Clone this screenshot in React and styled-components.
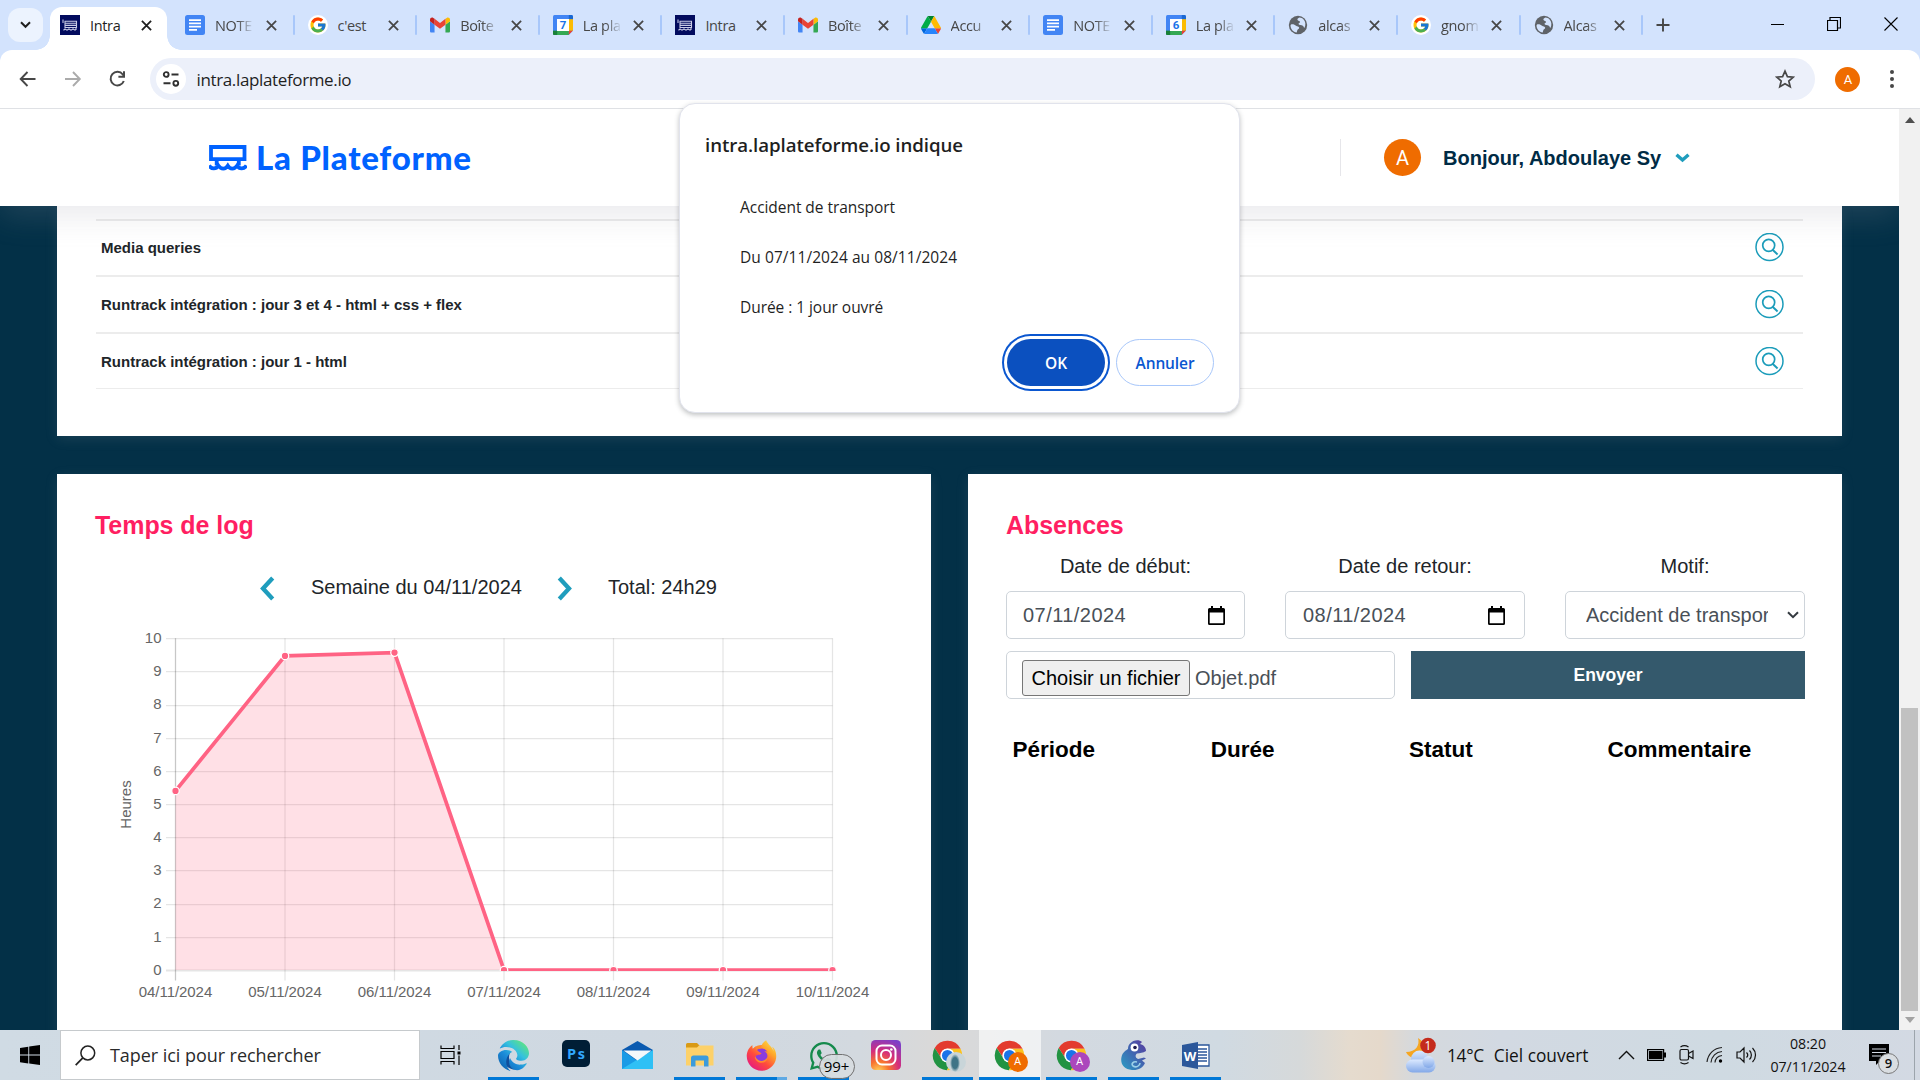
import React from "react";
import styled, { createGlobalStyle, css } from "styled-components";
import { FcGoogle } from "react-icons/fc";
import { FaWhatsapp, FaEdge, FaFirefoxBrowser } from "react-icons/fa6";

const ui = `"Open Sans", "Noto Sans", sans-serif`;
const arial = `"Liberation Sans", Arial, sans-serif`;

const Global = createGlobalStyle`
  * { box-sizing: border-box; }
  body { margin: 0; overflow: hidden; background: #fff; }
  svg { display: block; flex: none; }
`;

const Screen = styled.div`
  width: 1920px; height: 1080px; overflow: hidden; position: relative;
  display: flex; flex-direction: column; font-family: ${arial}; color: #212529;
`;

/* ---------- browser chrome ---------- */
const TabStrip = styled.div`
  height: 50px; flex: none; background: #d3e3fd; display: flex; align-items: flex-start;
  padding-left: 8px; font-family: ${ui}; font-size: 14.5px; color: #474747;
`;
const TabSearch = styled.div`
  width: 35px; height: 34px; margin: 8px 5px 0 0; border-radius: 12px; background: #ecf3fe;
  display: flex; align-items: center; justify-content: center;
`;
const Tab = styled.div`
  width: 122.6px; height: 43px; margin-top: 7px; padding: 0 10px 7px 14px; position: relative;
  display: flex; align-items: center;
  ${(p) => p.$sep && css`
    &::after { content: ""; position: absolute; right: -1px; top: 8px; width: 2px; height: 20px; background: #a8c7fa; border-radius: 1px; }
  `}
  ${(p) => p.$active && css`
    width: 116.5px; margin-right: 4.5px; margin-left: 2px; padding-left: 10px; padding-right: 14px; background: #fff; border-radius: 12px 12px 0 0; color: #1f1f1f;
    &::before, &::after { content: ""; position: absolute; bottom: 0; width: 14px; height: 14px; }
    &::before { left: -14px; background: radial-gradient(circle at 0 0, transparent 13.5px, #fff 14px); }
    &::after { right: -14px; background: radial-gradient(circle at 100% 0, transparent 13.5px, #fff 14px); }
  `}
`;
const TabTitle = styled.div`
  width: 37px; margin-left: 10px; overflow: hidden; white-space: nowrap; line-height: 22px; letter-spacing: -0.35px; padding-top: 1px;
  ${(p) => p.$fade && css`
    -webkit-mask-image: linear-gradient(90deg, #000 60%, rgba(0,0,0,.12) 100%);
    mask-image: linear-gradient(90deg, #000 60%, rgba(0,0,0,.12) 100%);
  `}
`;
const TabClose = styled.div` margin-left: 13.5px; padding-top: 1px; `;
const NewTab = styled.div` margin: 18px 0 0 14px; `;
const WindowButtons = styled.div`
  margin-left: auto; padding: 17px 22px 0 0; display: flex; gap: 42.7px; align-items: center;
`;

const ToolbarBack = styled.div` background: #d3e3fd; flex: none; height: 59px; `;
const Toolbar = styled.div`
  height: 59px; background: #fff; border-radius: 12px 12px 0 0; border-bottom: 1px solid #dfe1e5;
  display: flex; align-items: center; padding-left: 18px;
`;
const NavButtons = styled.div` display: flex; gap: 24.7px; margin-right: 22.6px; `;
const Omnibox = styled.div`
  width: 1665px; height: 42px; border-radius: 21px; background: #ecf0fa; margin-right: 20.5px;
  display: flex; align-items: center; padding: 0 19.5px 0 6px; font-family: ${ui}; color: #1f1f1f;
`;
const SiteInfo = styled.div`
  width: 30px; height: 30px; border-radius: 50%; background: #fff; margin-right: 10.5px;
  display: flex; align-items: center; justify-content: center;
`;
const Url = styled.div` font-size: 17px; letter-spacing: -0.36px; margin-right: auto; line-height: 24px; padding-top: 1px; `;
const Avatar = styled.div`
  width: ${(p) => p.$size}px; height: ${(p) => p.$size}px; border-radius: 50%; background: #ef6c00; color: #fff;
  display: flex; align-items: center; justify-content: center; font: 400 ${(p) => p.$font}px Roboto, sans-serif; flex: none;
`;
const Menu = styled.div` margin-left: 26px; display: flex; `;

/* ---------- web page ---------- */
const Viewport = styled.div` flex: 1; min-height: 0; display: flex; `;
const Page = styled.div`
  width: 1899px; background: #033047; display: flex; flex-direction: column; overflow: hidden;
`;
const SiteHeader = styled.header`
  height: 97px; flex: none; background: #fff; position: relative; z-index: 2;
  box-shadow: 0 10px 30px rgba(150, 152, 165, 0.2);
  display: flex; align-items: center; padding-left: 209px;
`;
const LogoText = styled.div`
  font: 900 33px Lato, sans-serif; color: #0062ff; margin-left: 9px; letter-spacing: 0.75px; width: 1084px; white-space: nowrap; padding-bottom: 2px;
`;
const UserMenu = styled.div`
  display: flex; align-items: center; height: 37px; border-left: 1px solid #e6e6ea; padding-left: 43px;
`;
const Greeting = styled.div` font-size: 20px; font-weight: 700; color: #002b45; margin: 0 14px 0 22px; padding-top: 1px; white-space: nowrap; `;

const Main = styled.main` width: 1785px; margin-left: 57px; flex: none; `;
const Panel = styled.section` background: #fff; box-shadow: 0 3px 12px rgba(160, 160, 170, 0.14); `;
const Projects = styled(Panel)` height: 230px; padding: 13px 39px 0; `;
const ProjectRow = styled.div`
  height: ${(p) => p.$h}px; border-top: 2px solid #ececec; display: flex; align-items: center; justify-content: space-between;
  padding: 0 19px ${(p) => p.$lift || 0}px 5px; font-size: 15px; font-weight: 700; color: #212529;
`;
const ProjectsEnd = styled.div` height: 1px; background: #ececec; `;
const Columns = styled.div` display: grid; grid-template-columns: 874px 874px; gap: 37px; margin-top: 38px; `;
const Card = styled(Panel)` height: 600px; padding: 36px 38px 0; `;
const CardTitle = styled.h2` margin: 0; font-size: 25px; line-height: 30px; font-weight: 700; color: #ff1f62; letter-spacing: -0.05px; `;

const WeekNav = styled.div` height: 30px; margin: 33px 0 0 165px; display: flex; align-items: center; font-size: 20px; `;
const WeekLabel = styled.div` width: 210px; margin: 0 36px; padding-bottom: 2px; white-space: nowrap; `;
const Total = styled.div` margin-left: 36px; padding-bottom: 2px; white-space: nowrap; `;

const Form = styled.div` font-size: 20px; `;
const FieldRow = styled.div` display: grid; grid-template-columns: 239px 240px 240px; gap: 40px; margin-top: 9px; `;
const Field = styled.div` display: flex; flex-direction: column; gap: 10px; `;
const FieldLabel = styled.div` text-align: center; height: 32px; line-height: 34px; `;
const Control = styled.div`
  height: 48px; border: 1px solid #ced4da; border-radius: 5px; background: #fff; color: #495057;
  display: flex; align-items: center; padding: 0 ${(p) => p.$right}px 0 ${(p) => p.$left}px; white-space: nowrap;
`;
const DateText = styled.div` margin-right: auto; letter-spacing: 0.45px; padding-top: 1px; `;
const SelectText = styled.div` width: 182px; overflow: hidden; margin-right: auto; padding-top: 1px; `;
const SubmitRow = styled.div` display: grid; grid-template-columns: 389px 394px; gap: 16px; margin-top: 12px; `;
const FileControl = styled(Control)` align-items: flex-start; padding-top: 8px; gap: 5px; line-height: 36px; `;
const FileButton = styled.div`
  width: 168px; height: 36px; border: 1px solid #767676; border-radius: 3px; background: #efefef; color: #000;
  text-align: center; line-height: 34px;
`;
const Submit = styled.div`
  height: 48px; background: #34596c; color: #fff; font-size: 17.5px; font-weight: 700; text-align: center; line-height: 48px;
`;
const AbsenceHead = styled.div`
  display: grid; grid-template-columns: repeat(4, 198.3px); margin: 37px 0 0 6.5px; font-size: 22.5px; font-weight: 700; color: #000; line-height: 28px;
`;

const Scrollbar = styled.div`
  width: 21px; background: #f1f1f1; display: flex; flex-direction: column; align-items: center; padding: 8px 0 7px;
`;
const Thumb = styled.div` width: 17px; height: 303px; background: #c1c1c1; margin-top: auto; margin-bottom: 6px; `;

/* ---------- alert dialog ---------- */
const Dialog = styled.div`
  position: absolute; left: 679px; top: 103px; width: 561px; height: 310px; z-index: 5; background: #fff;
  border: 1px solid #e1e3ec; border-radius: 16px; box-shadow: 0 2px 5px rgba(60, 64, 67, 0.32);
  padding: 27px 25px 0 25px; font-family: ${ui}; color: #1f1f1f;
`;
const DialogTitle = styled.div` font-size: 18.7px; font-weight: 600; line-height: 28px; letter-spacing: -0.07px; white-space: nowrap; `;
const DialogLine = styled.div` font-size: 15.5px; line-height: 50px; padding-left: 35px; letter-spacing: ${(p) => p.$track || -0.05}px; `;
const DialogBody = styled.div` padding-top: 23px; `;
const DialogActions = styled.div` display: flex; justify-content: flex-end; gap: 11px; margin-top: 7px; `;
const DialogButton = styled.div`
  width: 98px; height: 47px; border-radius: 24px; font-size: 15.5px; font-weight: 600; letter-spacing: -0.1px;
  display: flex; align-items: center; justify-content: center; padding-top: 1px;
  ${(p) => p.$primary
    ? css` background: #0b50bf; color: #fff; box-shadow: 0 0 0 3px #fff, 0 0 0 5px #0b57d0; `
    : css` border: 1px solid #a8c7fa; color: #0b57d0; `}
`;

/* ---------- taskbar ---------- */
const Taskbar = styled.div`
  height: 50px; flex: none; display: flex; align-items: stretch; font-family: ${ui}; color: #111; position: relative; z-index: 3;
  background: linear-gradient(90deg, #d0dbe4 0, #cfd8e1 640px, #d3d9df 860px, #dad9d8 940px, #d3d9e0 1060px, #d0dae2 1220px, #d6d9da 1300px, #e5dbce 1350px, #e5d9cb 1380px, #d5d9dd 1415px, #d2d9e2 1500px, #cfdae2 1720px, #d3d9e3 1920px);
`;
const Start = styled.div` width: 60px; display: flex; align-items: center; justify-content: center; `;
const SearchBox = styled.div`
  width: 360px; background: #fff; border: 1px solid #c6cacd; display: flex; align-items: center; padding-left: 14px; gap: 14px;
  font-size: 18px; letter-spacing: -0.05px; color: #2a2a2a; white-space: nowrap;
`;
const TaskView = styled.div` width: 62.5px; display: flex; align-items: center; justify-content: center; padding-right: 2.5px; `;
const AppSlot = styled.div`
  width: 62px; display: flex; flex-direction: column; align-items: center; position: relative; padding-top: 10px;
  background: ${(p) => (p.$active ? "rgba(255,255,255,.62)" : "none")};
`;
const Underline = styled.div`
  margin-top: auto; height: 3px; width: ${(p) => (p.$wide ? 61 : 51)}px;
  background: ${(p) => (p.$split ? "linear-gradient(90deg, #0078d7 41px, #5fa9e4 41px)" : "#0078d7")};
`;
const AppIcon = styled.div`
  width: 30px; height: 30px; position: relative; margin-top: ${(p) => p.$top || 0}px; display: flex; justify-content: center;
`;
const Badge = styled.div`
  position: absolute; left: 10px; top: 14px; width: 36px; height: 25px; border-radius: 13px; border: 1px solid #707070; background: rgba(215,220,224,.93);
  font-size: 15px; line-height: 22px; text-align: center; color: #000; z-index: 1;
`;
const Profile = styled.div`
  position: absolute; left: 13px; top: 12px; width: 20px; height: 20px; border-radius: 50%; background: ${(p) => p.$bg};
  color: #fff; font: 400 11px/20px Roboto, sans-serif; text-align: center;
`;
const Tray = styled.div` margin-left: auto; display: flex; align-items: center; width: 515px; `;
const Weather = styled.div` display: flex; align-items: center; font-size: 17.3px; letter-spacing: 0; gap: 10px; width: 210px; white-space: nowrap; `;
const Temp = styled.span` letter-spacing: -0.3px; `;
const TrayIcons = styled.div` display: flex; align-items: center; gap: 8px; width: 148px; margin-left: 3px; `;
const Clock = styled.div`
  width: 80px; margin-left: 2px; text-align: center; font-size: 14.2px; letter-spacing: -0.02px; line-height: 23px; white-space: nowrap; height: 46px; display: flex; flex-direction: column; align-items: center;
`;
const Notif = styled.div` margin-left: 20px; width: 33px; height: 30px; position: relative; padding-top: 4px; `;
const NotifCount = styled.div`
  position: absolute; left: 10px; top: 13px; width: 21px; height: 21px; border-radius: 50%; border: 1px solid #777; background: #d9dde1;
  font-size: 13px; font-weight: 600; line-height: 19px; text-align: center;
`;
const ShowDesktop = styled.div` margin-left: auto; width: 6px; align-self: stretch; border-left: 1px solid #9ca4ac; `;

/* ---------- favicons ---------- */
const LaPlateformeFav = () => (
  <svg width="20" height="20" viewBox="0 0 20 20"><rect width="20" height="20" fill="#020b5e" />
    <path d="M3 4.500V8M4.500 6.200H16.500V12.500H5V6.200M5 8.300H16.500M5 10.400H16.500M3.500 15.200l1.500-1.200 2 1.200 2-1.200 2 1.200 2-1.200 2 1.200 1.500-1.200M16 12.500V14" fill="none" stroke="#c9cbe6" strokeWidth="1.100" /></svg>
);
const DocsFav = () => (
  <svg width="20" height="20" viewBox="0 0 20 20"><rect width="20" height="20" rx="2.500" fill="#4285f4" />
    <path d="M4 5.200h12M4 8.400h12M4 11.600h12M4 14.800h8" stroke="#fff" strokeWidth="1.700" /></svg>
);
const GoogleFav = () => (
  <svg width="20" height="20" viewBox="0 0 20 20"><circle cx="10" cy="10" r="10" fill="#fff" /><FcGoogle x="1" y="1" size={18} /></svg>
);
const GmailFav = () => (
  <svg width="20" height="20" viewBox="52 42 88 66">
    <path fill="#4285f4" d="M58 108h14V74L52 59v43c0 3.320 2.690 6 6 6" /><path fill="#34a853" d="M120 108h14c3.320 0 6-2.690 6-6V59l-20 15" />
    <path fill="#fbbc04" d="M120 48v26l20-15v-8c0-7.420-8.470-11.650-14.400-7.200" /><path fill="#ea4335" d="M72 74V48l24 18 24-18v26L96 92" />
    <path fill="#c5221f" d="M52 51v8l20 15V48l-5.600-4.200c-5.940-4.450-14.400-.22-14.400 7.200" /></svg>
);
const CalFav = ({ day }) => (
  <svg width="20" height="20" viewBox="0 0 20 20">
    <rect width="20" height="20" rx="1.500" fill="#4285f4" /><path d="M15.800 0H18.500A1.500 1.500 0 0 1 20 1.500V4.200H15.800Z" fill="#1967d2" />
    <path d="M15.800 4.200H20V15.800H15.800Z" fill="#fbbc04" /><path d="M0 15.800H15.800V20H1.500A1.500 1.500 0 0 1 0 18.500Z" fill="#34a853" />
    <path d="M0 15.800H4.200V20H1.500A1.500 1.500 0 0 1 0 18.500Z" fill="#188038" /><path d="M15.800 15.800H20L15.800 20Z" fill="#ea4335" /><path d="M20 15.800V20H15.800Z" fill="#d3e3fd" />
    <rect x="4" y="4" width="12" height="12" fill="#fff" />
    <text x="10" y="14.200" fontSize="11.500" fontWeight="700" textAnchor="middle" fill="#1a73e8" fontFamily="Roboto, sans-serif">{day}</text></svg>
);
const DriveFav = () => (
  <svg width="20" height="18" viewBox="0 0 87.300 78">
    <path d="m6.600 66.850 3.850 6.650c.8 1.400 1.950 2.500 3.300 3.300l13.750-23.800h-27.500c0 1.550.4 3.100 1.200 4.500z" fill="#0066da" />
    <path d="m43.650 25-13.750-23.800c-1.350.8-2.500 1.900-3.300 3.300l-25.400 44a9.060 9.060 0 0 0-1.200 4.500h27.500z" fill="#00ac47" />
    <path d="m73.550 76.800c1.350-.8 2.500-1.900 3.300-3.300l1.600-2.750 7.650-13.250c.8-1.400 1.200-2.950 1.200-4.500h-27.500l5.850 11.500z" fill="#ea4335" />
    <path d="m43.650 25 13.750-23.800c-1.350-.8-2.900-1.200-4.500-1.200h-18.500c-1.600 0-3.150.45-4.500 1.200z" fill="#00832d" />
    <path d="m59.800 53h-32.300l-13.750 23.800c1.350.8 2.900 1.200 4.500 1.200h50.800c1.600 0 3.150-.45 4.500-1.200z" fill="#2684fc" />
    <path d="m73.400 26.500-12.700-22c-.8-1.400-1.950-2.500-3.300-3.300l-13.750 23.800 16.150 28h27.450c0-1.550-.4-3.100-1.200-4.500z" fill="#ffba00" /></svg>
);
const GlobeFav = () => (
  <svg width="20" height="20" viewBox="0 0 20 20"><circle cx="10" cy="10" r="9.200" fill="#5f6368" />
    <path d="M3 9.500c2-.5 4 .3 5 1.300 1.200 1 3 .6 3.200 2 .1 1.300-1.600 1.200-1.900 2.500l-.6 2.200C5 17 2.600 14 2.500 10.500ZM11.500 2.500c-1.300.8-2.500 1.200-2 2.600.5 1.200 2.600.5 2.500 2-.1 1.300-1.700 1-1.500 2 .4 1.300 3.200.7 4.300 1.600 1 .8.7 1.800 1.800 2 1.300-2.800 1-6.300-1-8.300-1.300-1.200-2.600-1.800-4.100-1.900Z" fill="#d3e3fd" /></svg>
);
const Cross = () => (
  <svg width="11" height="11" viewBox="0 0 11 11"><path d="M.9.9l9.200 9.200M10.100.9.9 10.100" stroke="currentColor" strokeWidth="1.800" /></svg>
);

const tabs = [
  { icon: <LaPlateformeFav />, title: "Intra", active: true },
  { icon: <DocsFav />, title: "NOTE", fade: true },
  { icon: <GoogleFav />, title: "c'est" },
  { icon: <GmailFav />, title: "Boîte", fade: true },
  { icon: <CalFav day="7" />, title: "La pla", fade: true },
  { icon: <LaPlateformeFav />, title: "Intra" },
  { icon: <GmailFav />, title: "Boîte", fade: true },
  { icon: <DriveFav />, title: "Accu", fade: true },
  { icon: <DocsFav />, title: "NOTE", fade: true },
  { icon: <CalFav day="6" />, title: "La pla", fade: true },
  { icon: <GlobeFav />, title: "alcas", fade: true },
  { icon: <GoogleFav />, title: "gnom", fade: true },
  { icon: <GlobeFav />, title: "Alcas", fade: true },
];

/* ---------- page drawings ---------- */
const Logo = () => (
  <svg width="38" height="26" viewBox="0 0 38 26" fill="none" stroke="#0062ff" strokeWidth="3.800">
    <path d="M2 2H35.500V14.200H2Z" /><path d="M7.700 14.500V20.500M29.800 14.500V20.500" />
    <path d="M0 20.500C2.500 24.300 7 24.500 9.500 20.800 12 24.500 16.500 24.500 18.800 20.800 21 24.500 25.500 24.500 28 20.800 30.500 24.500 35 24.300 37.500 20.500" strokeWidth="3.800" /></svg>
);
const Loupe = () => (
  <svg width="29" height="29" viewBox="0 0 29 29" fill="none" stroke="#1b9cba" strokeWidth="1.500">
    <circle cx="14.500" cy="14" r="13.500" /><circle cx="13.700" cy="12.300" r="6" strokeWidth="1.700" /><path d="M17.600 16.700l5 4.800" strokeWidth="1.900" /></svg>
);
const Chevron = ({ right }) => (
  <svg width="15" height="25" viewBox="0 0 15 25">
    <path d={right ? "M2.300 2 12 12.500 2.300 23" : "M12.700 2 3 12.500l9.700 10.500"} fill="none" stroke="#1f9dbd" strokeWidth="4.300" /></svg>
);
const CalendarGlyph = () => (
  <svg width="17" height="19" viewBox="0 0 17 19"><path d="M3 0h2v2h7V0h2v2h1.500A1.500 1.500 0 0 1 17 3.500V17.500A1.500 1.500 0 0 1 15.500 19H1.500A1.500 1.500 0 0 1 0 17.500V3.500A1.500 1.500 0 0 1 1.500 2H3ZM1.700 6.500V17.200H15.300V6.500Z" fill="#000" fillRule="evenodd" /></svg>
);

const days = ["04/11/2024", "05/11/2024", "06/11/2024", "07/11/2024", "08/11/2024", "09/11/2024", "10/11/2024"];
const hours = [5.4, 9.47, 9.57, 0, 0, 0, 0];
const ChartSvg = styled.svg` margin: 25px 0 0 17px; font-family: ${arial}; `;
function HoursChart() {
  const px = (i) => 63.5 + i * 109.5;
  const py = (v) => 342 - v * 33.17;
  const line = hours.map((v, i) => `${px(i)},${py(v)}`).join(" ");
  return (
    <ChartSvg width="780" height="384" viewBox="0 0 780 384" fontSize="15" fill="#666">
      <clipPath id="area"><rect x="58" y="0" width="720" height="343" /></clipPath>
      {Array.from({ length: 11 }, (_, v) => (
        <g key={v}>
          <path d={`M54 ${Math.round(py(v)) + 0.5}H${px(6)}`} stroke="rgba(0,0,0,.1)" strokeWidth={v === 0 ? 1.8 : 1.25} />
          <text x="49.500" y={py(v) + 4.800} textAnchor="end">{v}</text>
        </g>
      ))}
      {days.map((d, i) => (
        <g key={d}>
          <path d={`M${px(i)} ${py(10)}V352.500`} stroke={i ? "rgba(0,0,0,.1)" : "rgba(0,0,0,.22)"} strokeWidth="1.250" />
          <text x={px(i)} y="368.500" textAnchor="middle" textLength="73.500">{d}</text>
        </g>
      ))}
      <text transform="translate(18.500 176.500) rotate(-90)" textAnchor="middle" fontSize="15">Heures</text>
      <g clipPath="url(#area)">
        <polygon points={`${px(0)},${py(0)} ${line}`} fill="rgba(255,99,132,.2)" />
        <polyline points={line} fill="none" stroke="#ff6384" strokeWidth="3.750" />
        {hours.map((v, i) => <circle key={i} cx={px(i)} cy={py(v)} r="3.750" fill="#ff6384" stroke="#fff" strokeWidth="1.250" />)}
      </g>
    </ChartSvg>
  );
}

/* ---------- taskbar icons ---------- */
const ChromeIcon = () => (
  <svg width="31" height="31" viewBox="1 1 46 46">
    <path d="M5 13A22 22 0 0 1 43.400 14L24 14A10 10 0 0 0 15.300 29Z" fill="#e33b2e" />
    <path d="M5 13 15.300 29A10 10 0 0 0 32.700 29L23 46A22 22 0 0 1 5 13Z" fill="#229342" />
    <path d="M24 14H43.400A22 22 0 0 1 23 46L32.700 29A10 10 0 0 0 24 14Z" fill="#fcc31e" />
    <circle cx="24" cy="24" r="10.500" fill="#fff" /><circle cx="24" cy="24" r="8.200" fill="#1a73e8" /></svg>
);
const EdgeIcon = () => (
  <svg width="31" height="31" viewBox="0 0 31 31">
    <defs>
      <linearGradient id="edge" x1="0" y1="1" x2="0.900" y2="0"><stop offset="0" stopColor="#0c59a4" /><stop offset=".4" stopColor="#1b8ad8" /><stop offset=".65" stopColor="#35c1df" /><stop offset="1" stopColor="#66eb6e" /></linearGradient>
    </defs>
    <path d="M12 13C9 19 13 26 20 26.500 23 26.500 26 25 27 24 24 28 20 30 15 29.500 6 27 3 20 6 14Z" fill="#114f9c" />
    <FaEdge size={31} fill="url(#edge)" /></svg>
);
const PsIcon = () => (
  <svg width="28" height="28" viewBox="0 0 28 28"><rect width="28" height="27" rx="5" fill="#001e36" />
    <text x="14" y="18.500" fontSize="14.500" fontWeight="700" fill="#31a8ff" textAnchor="middle" fontFamily="Open Sans, sans-serif" textLength="18">Ps</text></svg>
);
const MailIcon = () => (
  <svg width="31" height="30" viewBox="0 0 31 30"><path d="M0 10 15.500 1 31 10V29H0Z" fill="#0a5ab0" /><path d="M0 10 15.500 21 31 10V29H0Z" fill="#1a9be6" /><path d="M0 29 31 10V29Z" fill="#2fc0f5" /><path d="M1.500 10.500H29.500L15.500 20.500Z" fill="#f4f8fb" /></svg>
);
const FolderIcon = () => (
  <svg width="28" height="26" viewBox="0 0 28 26"><path d="M0 1.500A1.500 1.500 0 0 1 1.500 0H11L13.500 2.500V8H0Z" fill="#d99a15" /><path d="M0 4.500H11L13 2.500H27.500V22.500H0Z" fill="#fdd169" />
    <path d="M5 15A2.500 2.500 0 0 1 7.500 12.500H20A2.500 2.500 0 0 1 22.500 15V23.500H18V17.500H9.500V23.500H5Z" fill="#3b9bdc" /></svg>
);
const FirefoxIcon = () => (
  <svg width="31" height="31" viewBox="0 0 31 31">
    <defs><linearGradient id="fox" x1="1" y1="0" x2="0.200" y2="1"><stop offset="0" stopColor="#fff44f" /><stop offset=".35" stopColor="#ffa52a" /><stop offset=".65" stopColor="#ff4a3c" /><stop offset="1" stopColor="#e31587" /></linearGradient></defs>
    <circle cx="15.500" cy="16" r="11" fill="#ff8a2c" /><circle cx="15.500" cy="14.500" r="6.500" fill="#8a3be0" /><FaFirefoxBrowser size={31} fill="url(#fox)" /></svg>
);
const InstaIcon = () => (
  <svg width="30" height="30" viewBox="0 0 30 30">
    <defs><radialGradient id="ig" cx=".25" cy="1.050" r="1.150"><stop offset="0" stopColor="#fed65c" /><stop offset=".3" stopColor="#f8742e" /><stop offset=".6" stopColor="#d62e7a" /><stop offset="1" stopColor="#7c3fc8" /></radialGradient></defs>
    <rect width="30" height="30" rx="4.500" fill="url(#ig)" /><g fill="none" stroke="#fff" strokeWidth="2"><rect x="5.500" y="5.500" width="19" height="19" rx="5.500" /><circle cx="15" cy="15" r="5" /></g><circle cx="20.300" cy="9.500" r="1.300" fill="#fff" /></svg>
);
const GnomeIcon = () => (
  <svg width="31" height="31" viewBox="0 0 31 31">
    <defs><linearGradient id="cham" x1="1" y1="0" x2="0" y2="1"><stop offset="0" stopColor="#5a3a9e" /><stop offset=".5" stopColor="#3f69b2" /><stop offset="1" stopColor="#2a9fc4" /></linearGradient></defs>
    <path d="M12 3.500C15 0 21-1 24 2L22 4C26 5 28 8 28 11 25 13 22 13 19 13.500 17 15 17 18 20 19L26 17.500 28 18.500 24 20.500 27 23C25 28 20 30.500 14 30 6 29.500 2 24 3.500 17 4.500 12 8 10.500 10 9 10 7 10.500 5 12 3.500Z" fill="url(#cham)" />
    <path d="M19 22C15 21 13 24 15 26 18 28 22 26 22 23" fill="none" stroke="#9bd0e8" strokeWidth="1.600" />
    <circle cx="16.500" cy="7.500" r="3.900" fill="#fff" /><circle cx="17" cy="7.500" r="1.800" fill="#201c50" /></svg>
);
const WordIcon = () => (
  <svg width="28" height="27" viewBox="0 0 28 27"><path d="M15 3H27V24H15Z" fill="#fff" stroke="#2b579a" strokeWidth="1.300" /><path d="M16 7H25M16 10H25M16 13H25M16 16H25M16 19H25" stroke="#2b579a" strokeWidth="1.400" />
    <path d="M0 3 16 0V27L0 24Z" fill="#2b579a" /><text x="8" y="18.500" fontSize="13" fontWeight="700" fill="#fff" textAnchor="middle" fontFamily="Open Sans, sans-serif">W</text></svg>
);
const WeatherIcon = () => (
  <svg width="32" height="38" viewBox="0 0 32 38">
    <defs><linearGradient id="cloud" x1="0" y1="0" x2="0" y2="1"><stop offset="0" stopColor="#dbe9ff" /><stop offset="1" stopColor="#82a8e8" /></linearGradient></defs>
    <path d="M13 2C15 9 11 16 1 16 3 21 10 24 17 21 23 18 22 7 13 2Z" fill="#f5a623" />
    <g fill="url(#cloud)"><circle cx="14.500" cy="23" r="8.500" /><rect x="1" y="23.500" width="29.500" height="13" rx="6.500" /><circle cx="23.500" cy="26" r="6" /></g>
    <circle cx="23" cy="9.500" r="7.800" fill="#c42b1c" /><text x="23" y="14" fontSize="12" fill="#fff" textAnchor="middle" fontFamily="Open Sans, sans-serif">1</text></svg>
);

const apps = [
  { icon: <EdgeIcon />, open: true },
  { icon: <PsIcon /> },
  { icon: <MailIcon /> },
  { icon: <FolderIcon />, open: true, top: 3 },
  { icon: <FirefoxIcon />, open: true, split: true },
  { icon: <FaWhatsapp size={32} color="#158a4c" />, open: true, badge: "99+" },
  { icon: <InstaIcon /> },
  { icon: <ChromeIcon />, open: true, profile: ["radial-gradient(ellipse 5px 9px at 45% 55%, #3f7486 60%, #c9d5d9 100%)", ""] },
  { icon: <ChromeIcon />, open: true, active: true, profile: ["#ef6c00", "A"] },
  { icon: <ChromeIcon />, open: true, profile: ["#ab47bc", "A"] },
  { icon: <GnomeIcon />, open: true },
  { icon: <WordIcon />, open: true, top: 2 },
];

export default function App() {
  return (
    <Screen>
      <Global />
      <TabStrip>
        <TabSearch><svg width="11" height="8" viewBox="0 0 11 8"><path d="M1 1.300 5.500 5.800 10 1.300" fill="none" stroke="#1f1f1f" strokeWidth="2" /></svg></TabSearch>
        {tabs.map((t, i) => (
          <Tab key={i} $active={t.active} $sep={!t.active}>
            {t.icon}<TabTitle $fade={t.fade}>{t.title}</TabTitle><TabClose><Cross /></TabClose>
          </Tab>
        ))}
        <NewTab><svg width="14" height="14" viewBox="0 0 14 14"><path d="M7 .5v13M.5 7h13" stroke="#474747" strokeWidth="1.900" /></svg></NewTab>
        <WindowButtons>
          <svg width="14" height="14" viewBox="0 0 14 14"><path d="M0 7.500h13" stroke="#000" /></svg>
          <svg width="14" height="14" viewBox="0 0 14 14"><path d="M.5 3.500h10v10H.5ZM3 3.500V.5h10.500v10.500H10.500" fill="none" stroke="#000" strokeWidth="1.200" /></svg>
          <svg width="14" height="14" viewBox="0 0 14 14"><path d="M.5.5l13 13M13.500.5l-13 13" stroke="#000" strokeWidth="1.100" /></svg>
        </WindowButtons>
      </TabStrip>

      <ToolbarBack>
        <Toolbar>
          <NavButtons>
            <svg width="20" height="20" viewBox="0 0 20 20"><path d="M17.500 10H3M9.500 3 2.700 10l6.800 7" fill="none" stroke="#474747" strokeWidth="1.900" /></svg>
            <svg width="20" height="20" viewBox="0 0 20 20"><path d="M2 10H16.500M10 3l6.800 7-6.800 7" fill="none" stroke="#ababab" strokeWidth="1.900" /></svg>
            <svg width="20" height="20" viewBox="0 0 20 20"><path d="M16.800 12A6.800 6.800 0 1 1 15.800 5.500L17 7.200" fill="none" stroke="#474747" strokeWidth="2" /><path d="M17 2.200V7.800H11.400" fill="none" stroke="#474747" strokeWidth="2" /></svg>
          </NavButtons>
          <Omnibox>
            <SiteInfo><svg width="18" height="16" viewBox="0 0 18 16" fill="none" stroke="#303030" strokeWidth="1.900"><circle cx="4.200" cy="3.500" r="2.400" /><path d="M9.500 3.500H16.500M1.500 12.300H8.500" /><circle cx="13.800" cy="12.300" r="2.400" /></svg></SiteInfo>
            <Url>intra.laplateforme.io</Url>
            <svg width="20" height="20" viewBox="0 0 20 20"><path d="M10 2.200l2.400 5.400 5.900.5-4.500 3.900 1.400 5.700L10 14.700l-5.200 3 1.400-5.700L1.700 8.100l5.900-.5Z" fill="none" stroke="#474747" strokeWidth="1.700" /></svg>
          </Omnibox>
          <Avatar $size={25} $font={13}>A</Avatar>
          <Menu><svg width="12" height="20" viewBox="0 0 12 20" fill="#474747"><circle cx="6" cy="3" r="2" /><circle cx="6" cy="10" r="2" /><circle cx="6" cy="17" r="2" /></svg></Menu>
        </Toolbar>
      </ToolbarBack>

      <Viewport>
        <Page>
          <SiteHeader>
            <Logo /><LogoText>La Plateforme</LogoText>
            <UserMenu>
              <Avatar $size={37} $font={20}>A</Avatar>
              <Greeting>Bonjour, Abdoulaye Sy</Greeting>
              <svg width="15" height="10" viewBox="0 0 15 10"><path d="M1.500 1.800 7.500 7 13.500 1.800" fill="none" stroke="#1f9dbd" strokeWidth="3.400" /></svg>
            </UserMenu>
          </SiteHeader>
          <Main>
            <Projects>
              <ProjectRow $h={56} $lift={2}>Media queries<Loupe /></ProjectRow>
              <ProjectRow $h={57}>Runtrack intégration : jour 3 et 4 - html + css + flex<Loupe /></ProjectRow>
              <ProjectRow $h={56}>Runtrack intégration : jour 1 - html<Loupe /></ProjectRow>
              <ProjectsEnd />
            </Projects>
            <Columns>
              <Card>
                <CardTitle>Temps de log</CardTitle>
                <WeekNav><Chevron /><WeekLabel>Semaine du 04/11/2024</WeekLabel><Chevron right /><Total>Total: 24h29</Total></WeekNav>
                <HoursChart />
              </Card>
              <Card>
                <CardTitle>Absences</CardTitle>
                <Form>
                  <FieldRow>
                    <Field><FieldLabel>Date de début:</FieldLabel><Control $left={16} $right={19}><DateText>07/11/2024</DateText><CalendarGlyph /></Control></Field>
                    <Field><FieldLabel>Date de retour:</FieldLabel><Control $left={17} $right={19}><DateText>08/11/2024</DateText><CalendarGlyph /></Control></Field>
                    <Field><FieldLabel>Motif:</FieldLabel><Control $left={20} $right={5}><SelectText>Accident de transpor</SelectText>
                      <svg width="12" height="8" viewBox="0 0 12 8"><path d="M1 1.200 6 6.200 11 1.200" fill="none" stroke="#343a40" strokeWidth="2" /></svg></Control></Field>
                  </FieldRow>
                  <SubmitRow>
                    <FileControl $left={15} $right={0}><FileButton>Choisir un fichier</FileButton>Objet.pdf</FileControl>
                    <Submit>Envoyer</Submit>
                  </SubmitRow>
                </Form>
                <AbsenceHead><div>Période</div><div>Durée</div><div>Statut</div><div>Commentaire</div></AbsenceHead>
              </Card>
            </Columns>
          </Main>
        </Page>
        <Scrollbar>
          <svg width="10" height="6" viewBox="0 0 10 6"><path d="M0 6 5 0l5 6Z" fill="#505050" /></svg>
          <Thumb />
          <svg width="10" height="6" viewBox="0 0 10 6"><path d="M0 0 5 6l5-6Z" fill="#a3a3a3" /></svg>
        </Scrollbar>
      </Viewport>

      <Dialog>
        <DialogTitle>intra.laplateforme.io indique</DialogTitle>
        <DialogBody>
          <DialogLine>Accident de transport</DialogLine>
          <DialogLine $track={0.06}>Du 07/11/2024 au 08/11/2024</DialogLine>
          <DialogLine>Durée : 1 jour ouvré</DialogLine>
        </DialogBody>
        <DialogActions><DialogButton $primary>OK</DialogButton><DialogButton>Annuler</DialogButton></DialogActions>
      </Dialog>

      <Taskbar>
        <Start><svg width="20" height="20" viewBox="0 0 20 20"><path d="M0 2.900 8.300 1.700V9.600H0ZM9.200 1.500 20 0V9.600H9.200ZM0 10.500H8.300V18.400L0 17.200ZM9.200 10.500H20V20L9.200 18.500Z" fill="#000" /></svg></Start>
        <SearchBox><svg width="21" height="21" viewBox="0 0 21 21"><circle cx="12.800" cy="8" r="6.900" fill="none" stroke="#222" strokeWidth="1.500" /><path d="M7.800 12.900.7 20.200" stroke="#222" strokeWidth="1.700" /></svg>Taper ici pour rechercher</SearchBox>
        <TaskView><svg width="21" height="20" viewBox="0 0 21 20" fill="none" stroke="#000" strokeWidth="1.200"><path d="M1 .5V3.500H14V.5M1 19.500V16.500H14V19.500M1 6.500H14V13.500H1ZM19 0V5M19 10.500V20" /><path d="M17.500 6.500H20.500V9.500H17.500Z" fill="#000" stroke="none" /></svg></TaskView>
        {apps.map((a, i) => (
          <AppSlot key={i} $active={a.active}>
            <AppIcon $top={a.top}>{a.icon}
              {a.badge && <Badge>{a.badge}</Badge>}
              {a.profile && <Profile $bg={a.profile[0]}>{a.profile[1]}</Profile>}
            </AppIcon>
            {a.open && <Underline $wide={a.active} $split={a.split} />}
          </AppSlot>
        ))}
        <Tray>
          <Weather><WeatherIcon /><Temp>14°C</Temp><span>Ciel couvert</span></Weather>
          <TrayIcons>
            <svg width="17" height="10" viewBox="0 0 17 10"><path d="M1 9 8.500 1.500 16 9" fill="none" stroke="#111" strokeWidth="1.400" /></svg>
            <svg width="23" height="12" viewBox="-4 0 23 12"><rect x=".6" y=".6" width="16" height="10.800" fill="none" stroke="#000" strokeWidth="1.200" /><rect x="2" y="2" width="13.500" height="8" /><rect x="17" y="3.500" width="2" height="5" /></svg>
            <svg width="20" height="20" viewBox="-4 0 20 20" fill="none" stroke="#111" strokeWidth="1.200"><rect x="2" y="4.500" width="8.500" height="10.500" rx="1.500" /><path d="M10.500 8.500 15 6V13.500L10.500 11M2.500 2C5 .3 8 .3 10.500 2M2.500 17.500C5 19.200 8 19.200 10.500 17.500" /></svg>
            <svg width="22" height="18" viewBox="-4 0 22 18" fill="none" stroke="#222" strokeWidth="1.200"><path d="M1 16C2 8 8 2 16 1.500M5 16.500C5.500 10.500 10 6 16 5.500M9 16.500C9.300 13 12 10 16 9.500" /><circle cx="14.500" cy="15" r="1.700" fill="#000" stroke="none" /></svg>
            <svg width="25" height="18" viewBox="-4 0 25 18" fill="none" stroke="#111" strokeWidth="1.200"><path d="M1 6H4L8 2V16L4 12H1ZM10.500 6.500C12 8 12 10 10.500 11.500M13.500 4.500C16 7 16 11 13.500 13.500M16.500 2C20.500 6 20.500 12 16.500 16" /></svg>
          </TrayIcons>
          <Clock><span>08:20</span><span>07/11/2024</span></Clock>
          <Notif>
            <svg width="22" height="22" viewBox="0 0 22 22"><path d="M1 0H21V17H12L8 21V17H1Z" fill="#000" /><path d="M4 5H18M4 8.500H18M4 12H13" stroke="#d3d9e3" strokeWidth="1.200" /></svg>
            <NotifCount>9</NotifCount>
          </Notif>
          <ShowDesktop />
        </Tray>
      </Taskbar>
    </Screen>
  );
}
